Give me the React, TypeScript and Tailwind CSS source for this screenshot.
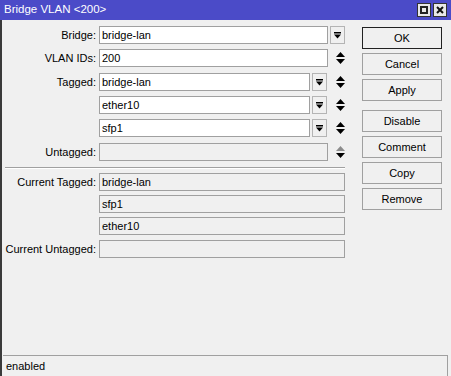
import React from 'react';

const DropIcon = () => (
  <svg width="7" height="7" viewBox="0 0 7 7">
    <rect x="0" y="0" width="7" height="1.5" fill="#000" />
    <polygon points="0,2.5 7,2.5 3.5,6.5" fill="#000" />
  </svg>
);

const DropButton: React.FC<{ className?: string }> = ({ className = '' }) => (
  <div className={`h-[18px] w-[15px] border border-[#b4b4b4] bg-[#f0f0f0] flex items-center justify-center ${className}`}>
    <DropIcon />
  </div>
);

const UpDown: React.FC<{ dimTop?: boolean }> = ({ dimTop }) => (
  <div className="w-[24px] flex justify-center">
    <svg width="9" height="12" viewBox="0 0 9 12">
      <polygon points="4.5,0 9,5 0,5" fill={dimTop ? '#8c8c8c' : '#000'} />
      <polygon points="0,7 9,7 4.5,12" fill="#000" />
    </svg>
  </div>
);

const Field: React.FC<{ value?: string; width: string; disabled?: boolean }> = ({ value = '', width, disabled }) => (
  <div
    className={`h-[18px] ${width} border border-[#a0a0a0] ${disabled ? 'bg-[#f0f0f0]' : 'bg-white'} pl-[2px] flex items-center leading-none whitespace-nowrap`}
  >
    {value}
  </div>
);

const Row: React.FC<{ label?: string; className?: string; children: React.ReactNode }> = ({ label, className = '', children }) => (
  <div className={`flex items-center h-[18px] ${className}`}>
    <div className="w-[94px] text-right whitespace-nowrap">{label}</div>
    <div className="ml-[3px] flex items-center">{children}</div>
  </div>
);

const Btn: React.FC<{ label: string; className?: string; focused?: boolean }> = ({ label, className = '', focused }) => (
  <div
    className={`h-[22px] w-[80px] flex items-center justify-center bg-[#f0f0f0] border ${focused ? 'border-[#222]' : 'border-[#a0a0a0]'} ${className}`}
  >
    {label}
  </div>
);

export default function App() {
  return (
    <div className="w-[451px] h-[376px] flex flex-col bg-[#f0f0f0] font-['Liberation_Sans',Arial,sans-serif] text-[11px] text-black overflow-hidden">
      {/* Title bar */}
      <div className="h-[20px] shrink-0 bg-[#4b4bc8] flex items-center pl-[4px] pr-[4px] text-white text-[11.5px]">
        <span>Bridge VLAN &lt;200&gt;</span>
        <div className="ml-auto flex gap-[2px]">
          <div className="w-[14px] h-[14px] bg-[#e8e8e8] border border-[#333] flex items-center justify-center">
            <div className="w-[8px] h-[8px] border-2 border-[#222]" />
          </div>
          <div className="w-[14px] h-[14px] bg-[#e8e8e8] border border-[#333] flex items-center justify-center">
            <svg width="8" height="8" viewBox="0 0 8 8">
              <path d="M1 1 L7 7 M7 1 L1 7" stroke="#111" strokeWidth="2" />
            </svg>
          </div>
        </div>
      </div>

      <div className="flex-1 flex flex-col border-l-2 border-[#3a3a3a]">
        <div className="flex-1 flex">
          {/* Form */}
          <div className="w-[353px] pt-[6px] flex flex-col">
            <Row label="Bridge:">
              <Field value="bridge-lan" width="w-[229px]" />
              <DropButton className="ml-[2px]" />
            </Row>
            <Row label="VLAN IDs:" className="mt-[5px]">
              <Field value="200" width="w-[229px]" />
              <UpDown />
            </Row>
            <Row label="Tagged:" className="mt-[6px]">
              <Field value="bridge-lan" width="w-[211px]" />
              <DropButton className="ml-[2px] mr-[1px]" />
              <UpDown />
            </Row>
            <Row className="mt-[5px]">
              <Field value="ether10" width="w-[211px]" />
              <DropButton className="ml-[2px] mr-[1px]" />
              <UpDown />
            </Row>
            <Row className="mt-[5px]">
              <Field value="sfp1" width="w-[211px]" />
              <DropButton className="ml-[2px] mr-[1px]" />
              <UpDown />
            </Row>
            <Row label="Untagged:" className="mt-[6px]">
              <Field width="w-[229px]" disabled />
              <UpDown dimTop />
            </Row>

            <div className="mt-[6px] ml-[3px] w-[340px] border-t border-[#a0a0a0] border-b border-b-white" />

            <Row label="Current Tagged:" className="mt-[4px]">
              <Field value="bridge-lan" width="w-[246px]" disabled />
            </Row>
            <Row className="mt-[4px]">
              <Field value="sfp1" width="w-[246px]" disabled />
            </Row>
            <Row className="mt-[4px]">
              <Field value="ether10" width="w-[246px]" disabled />
            </Row>
            <Row label="Current Untagged:" className="mt-[5px]">
              <Field width="w-[246px]" disabled />
            </Row>
          </div>

          {/* Buttons */}
          <div className="ml-[7px] pt-[7px] flex flex-col">
            <Btn label="OK" focused />
            <Btn label="Cancel" className="mt-[4px]" />
            <Btn label="Apply" className="mt-[4px]" />
            <Btn label="Disable" className="mt-[9px]" />
            <Btn label="Comment" className="mt-[4px]" />
            <Btn label="Copy" className="mt-[4px]" />
            <Btn label="Remove" className="mt-[4px]" />
          </div>
        </div>

        {/* Status bar */}
        <div className="h-[21px] shrink-0 ml-[1px] w-[445px] border-t border-r border-[#a0a0a0] flex items-center pl-[3px]">
          enabled
        </div>
      </div>
    </div>
  );
}
